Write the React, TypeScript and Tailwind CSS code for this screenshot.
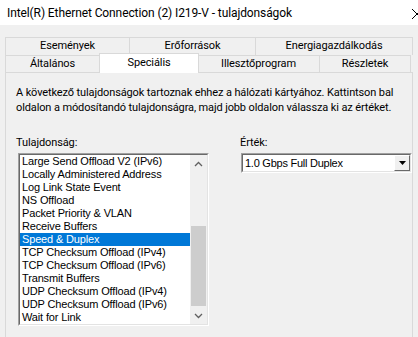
import React from "react";

const items = [
  "Large Send Offload V2 (IPv6)",
  "Locally Administered Address",
  "Log Link State Event",
  "NS Offload",
  "Packet Priority & VLAN",
  "Receive Buffers",
  "Speed & Duplex",
  "TCP Checksum Offload (IPv4)",
  "TCP Checksum Offload (IPv6)",
  "Transmit Buffers",
  "UDP Checksum Offload (IPv4)",
  "UDP Checksum Offload (IPv6)",
  "Wait for Link",
];

function Tab({ label, w, first }: { label: string; w: string; first?: boolean }) {
  return (
    <div
      className={`${w} flex items-center justify-center border-t border-r border-[#d9d9d9] ${first ? "border-l" : ""} text-[11px] text-black`}
    >
      {label}
    </div>
  );
}

export default function App() {
  return (
    <div className="w-[418px] h-[337px] overflow-hidden bg-[#f0f0f0] relative font-['Roboto',sans-serif] tracking-[-0.1px]">
      {/* title bar */}
      <div className="h-[25px] bg-white flex items-center pl-[7px] text-[12px] text-black relative">
        <span>Intel(R) Ethernet Connection (2) I219-V - tulajdonságok</span>
        <svg className="absolute left-[411px] top-[8px]" width="12" height="12" viewBox="0 0 12 12">
          <path d="M1 1 L11 11 M11 1 L1 11" stroke="#000" strokeWidth="1" />
        </svg>
      </div>

      <div className="pt-[12px]">
        {/* tab row 1 */}
        <div className="flex h-[18px] ml-[5px]">
          <Tab label="Események" w="w-[125px]" first />
          <Tab label="Erőforrások" w="w-[126px]" />
          <Tab label="Energiagazdálkodás" w="w-[157px]" />
        </div>
        {/* tab row 2 */}
        <div className="flex h-[17px] ml-[5px]">
          <Tab label="Általános" w="w-[95px]" first />
          <div className="w-[100px] h-[20px] -mt-[2px] relative z-10 bg-white border-t border-l border-r border-[#d9d9d9] flex justify-center pt-[1px] text-[11px] text-black -ml-px -mr-px">
            Speciális
          </div>
          <Tab label="Illesztőprogram" w="w-[122px]" />
          <Tab label="Részletek" w="w-[91px]" />
        </div>
        {/* panel */}
        <div className="ml-[5px] w-[408px] h-[280px] border border-[#d9d9d9] bg-[#f0f0f0] pl-[10px] pt-[12px]">
          <p className="text-[11px] leading-[15px] text-black whitespace-nowrap tracking-[-0.12px]">
            A következő tulajdonságok tartoznak ehhez a hálózati kártyához. Kattintson bal
            <br />
            oldalon a módosítandó tulajdonságra, majd jobb oldalon válassza ki az értéket.
          </p>
          <div className="flex mt-[20px]">
            <div className="w-[224px]">
              <div className="text-[11px] leading-[15px] text-black">Tulajdonság:</div>
              <div className="ml-[2px] mt-[3px] w-[191px] h-[173px] border-t border-l border-[#a0a0a0] border-b border-r border-b-white border-r-white">
                <div className="h-full border-t border-l border-[#696969] border-b border-r border-b-[#e3e3e3] border-r-[#e3e3e3] bg-white flex">
                  <div className="flex-1 flex flex-col overflow-hidden font-['Liberation_Sans',Arial,sans-serif] tracking-[-0.15px]">
                    {items.map((it) => (
                      <div
                        key={it}
                        className={`h-[13px] leading-[13px] text-[11px] pl-[2px] whitespace-nowrap ${
                          it === "Speed & Duplex" ? "bg-[#0078d7] text-white" : "text-black"
                        }`}
                      >
                        {it}
                      </div>
                    ))}
                  </div>
                  {/* scrollbar */}
                  <div className="w-[17px] bg-[#f0f0f0] flex flex-col items-center">
                    <div className="h-[17px] w-full flex items-center justify-center">
                      <svg width="9" height="6" viewBox="0 0 9 6">
                        <path d="M1 5 L4.5 1.5 L8 5" stroke="#606060" strokeWidth="1.3" fill="none" />
                      </svg>
                    </div>
                    <div className="mt-[54px] w-[15px] h-[80px] bg-[#cdcdcd]" />
                    <div className="flex-1" />
                    <div className="h-[17px] w-full flex items-center justify-center">
                      <svg width="9" height="6" viewBox="0 0 9 6">
                        <path d="M1 1 L4.5 4.5 L8 1" stroke="#606060" strokeWidth="1.3" fill="none" />
                      </svg>
                    </div>
                  </div>
                </div>
              </div>
            </div>
            <div className="flex-1">
              <div className="text-[11px] leading-[15px] text-black">Érték:</div>
              <div className="ml-[1px] mt-[3px] w-[171px] h-[20px] border-t border-l border-[#a0a0a0] border-b border-r border-b-white border-r-white">
                <div className="h-full border-t border-l border-[#696969] border-b border-r border-b-[#e3e3e3] border-r-[#e3e3e3] bg-white flex items-center">
                  <div className="flex-1 pl-[2px] text-[11px] text-black font-['Liberation_Sans',Arial,sans-serif] tracking-[-0.25px]">
                    1.0 Gbps Full Duplex
                  </div>
                  <div className="w-[16px] h-[16px] bg-[#f0f0f0] border-t border-l border-white border-b border-r border-b-[#696969] border-r-[#696969] flex items-center justify-center">
                    <svg width="7" height="4" viewBox="0 0 7 4">
                      <path d="M0 0 L7 0 L3.5 4 Z" fill="#000" />
                    </svg>
                  </div>
                </div>
              </div>
            </div>
          </div>
        </div>
      </div>
    </div>
  );
}
